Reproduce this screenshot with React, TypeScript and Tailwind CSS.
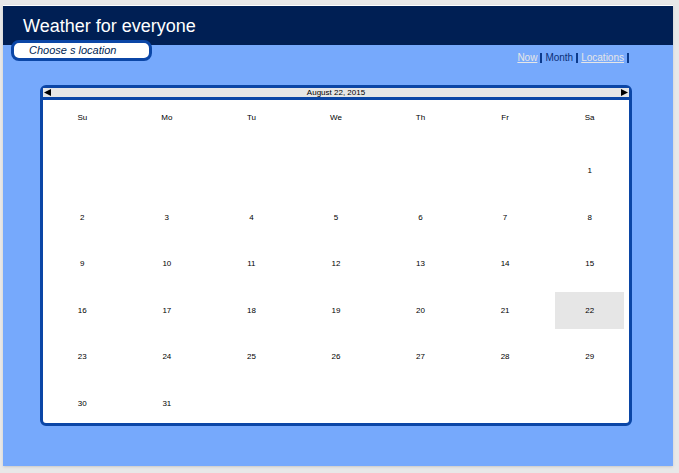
const weekdays = ["Su", "Mo", "Tu", "We", "Th", "Fr", "Sa"];
const leadingBlanks = 6;
const daysInMonth = 31;
const selectedDay = 22;

const weeks: (number | null)[][] = Array.from({ length: 6 }, (_, week) =>
  Array.from({ length: 7 }, (_, column) => {
    const day = week * 7 + column - leadingBlanks + 1;
    return day >= 1 && day <= daysInMonth ? day : null;
  }),
);

function Header() {
  return (
    <header className="h-10 border-t border-white bg-[#001f54] px-5 pt-2">
      <h1 className="text-lg leading-6 text-white">Weather for everyone</h1>
    </header>
  );
}

function Separator() {
  return <span className="h-[10px] w-[2px] bg-[#0b3a8c]" />;
}

function Toolbar() {
  return (
    <div className="flex h-10 items-start justify-between pr-11 pl-2">
      <input
        type="text"
        aria-label="Location"
        placeholder="Choose s location"
        className="-mt-[5px] h-[21px] w-[141px] rounded-lg border-3 border-[#0b46a6] bg-white px-[15px] pb-[2px] text-[11px] italic text-[#001f54] outline-none placeholder:text-[#001f54] placeholder:opacity-100"
      />
      <nav className="mt-[7px] flex items-center gap-[3px] text-[10px] leading-3 text-[#0a2f78]">
        <a href="#now" className="text-[#e6e6e6] underline">Now</a>
        <Separator />
        <span>Month</span>
        <Separator />
        <a href="#locations" className="text-[#e6e6e6] underline">Locations</a>
        <Separator />
      </nav>
    </div>
  );
}

function Calendar() {
  return (
    <section className="mr-[41px] ml-[37px] rounded-md border-3 border-[#0b46a6] bg-white text-[8px] text-black">
      <div className="flex h-3 items-center justify-between border-b-3 border-[#0b46a6] bg-[#e6e6e6] px-px leading-[9px]">
        <button type="button" aria-label="Previous month">
          <svg width="7" height="7" viewBox="0 0 7 7" className="block">
            <path d="M7 0v7L0 3.5z" />
          </svg>
        </button>
        <span>August 22, 2015</span>
        <button type="button" aria-label="Next month">
          <svg width="7" height="7" viewBox="0 0 7 7" className="block">
            <path d="M0 0v7l7-3.5z" />
          </svg>
        </button>
      </div>
      <div className="-mx-[3px] -mb-1">
        <table className="h-[327px] w-full table-fixed border-collapse text-center">
          <thead>
            <tr className="h-12">
              {weekdays.map((name) => (
                <th key={name} className="p-0 pb-[13px] font-normal">{name}</th>
              ))}
            </tr>
          </thead>
          <tbody>
            {weeks.map((week, index) => (
              <tr key={index}>
                {week.map((day, column) => (
                  <td key={column} className="px-2 py-0">
                    {day !== null && (
                      <div
                        className={
                          day === selectedDay
                            ? "flex h-[37px] items-center justify-center bg-[#e6e6e6]"
                            : "flex h-[37px] items-center justify-center"
                        }
                      >
                        {day}
                      </div>
                    )}
                  </td>
                ))}
              </tr>
            ))}
          </tbody>
        </table>
      </div>
    </section>
  );
}

export default function App() {
  return (
    <div className="min-h-screen bg-[#e8e8e8] pt-[5px] pr-[6px] pb-2 pl-[3px] font-['Liberation_Sans',Arial,sans-serif]">
      <main className="bg-[#76a9fc] pb-10 shadow-sm">
        <Header />
        <Toolbar />
        <Calendar />
      </main>
    </div>
  );
}
